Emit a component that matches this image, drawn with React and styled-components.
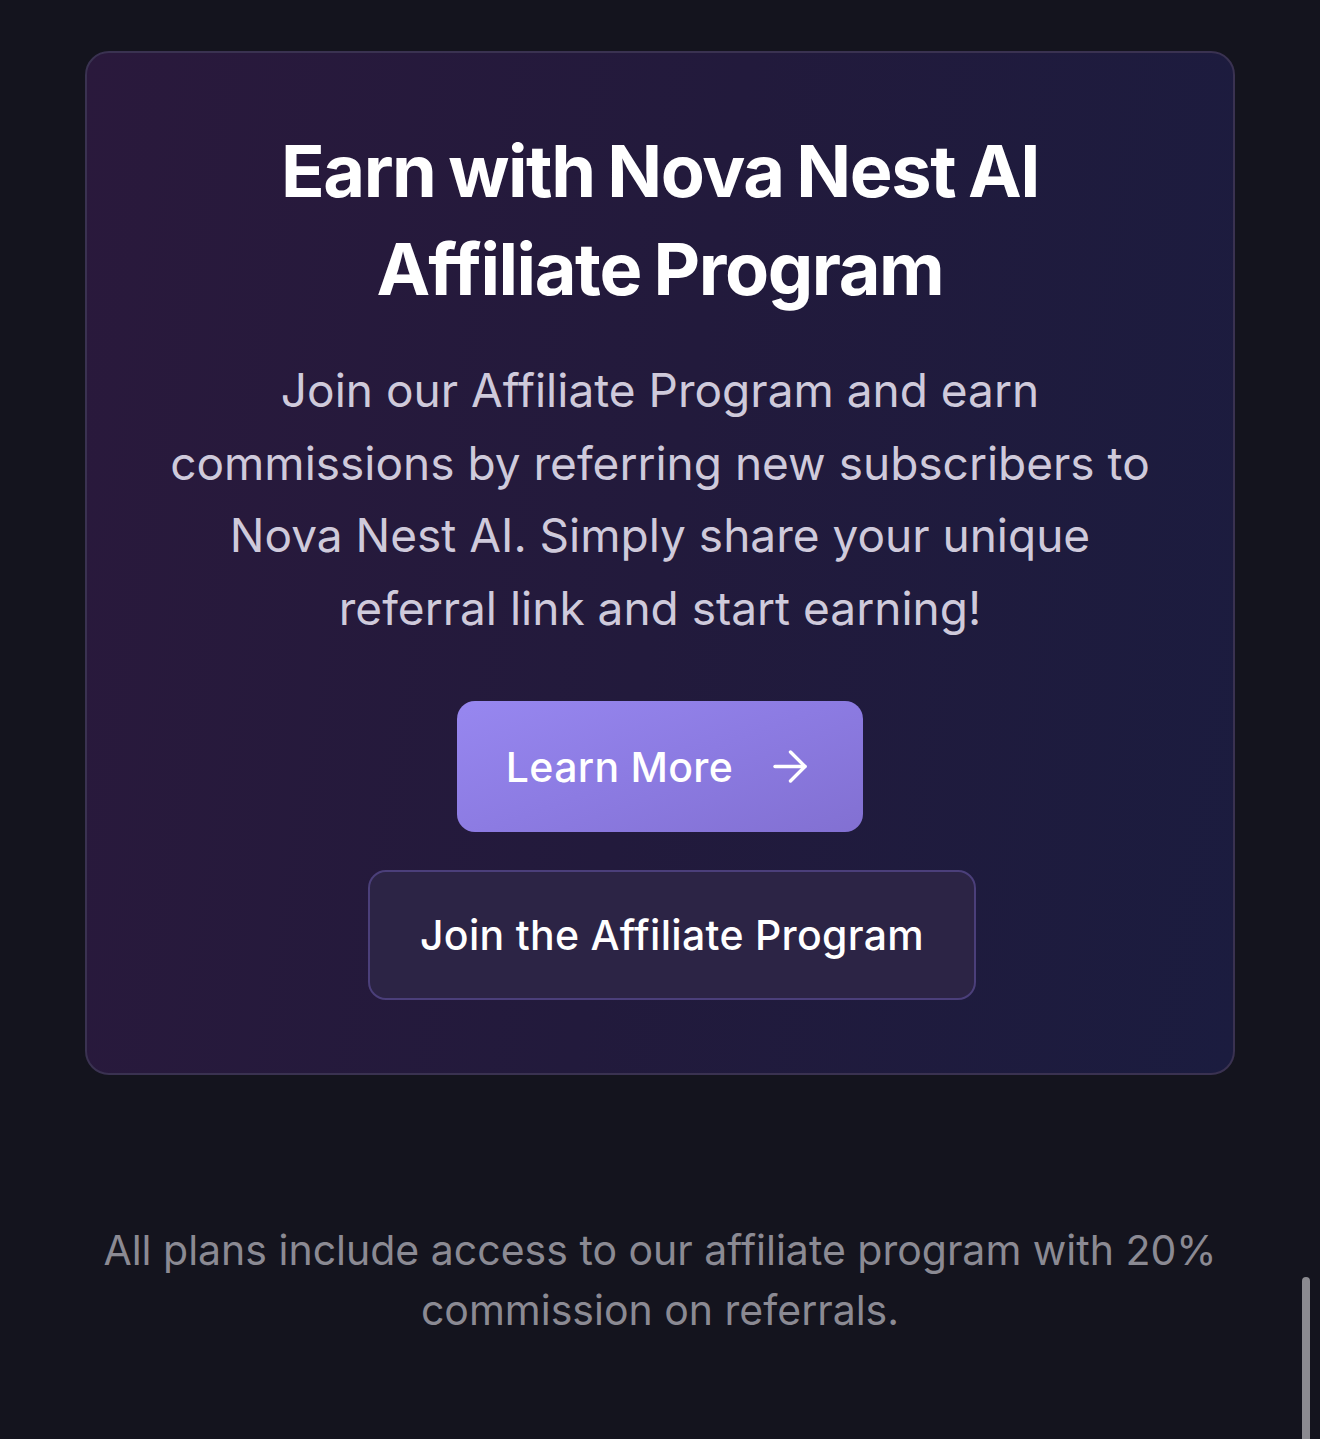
import React from 'react';
import styled, { createGlobalStyle } from 'styled-components';

const Global = createGlobalStyle`
  html, body {
    margin: 0;
    padding: 0;
    background: #14141e;
  }
  body {
    font-family: Inter, "Noto Sans", "Liberation Sans", sans-serif;
    -webkit-font-smoothing: antialiased;
  }
`;

const Page = styled.div`
  min-height: 1439px;
  padding: 51px 85px 0;
  box-sizing: border-box;
  display: flex;
  flex-direction: column;
  align-items: stretch;
`;

const Card = styled.section`
  border: 2px solid #3a3251;
  border-radius: 24px;
  background: linear-gradient(100deg, #2a193c 0%, #221a3c 50%, #1b1c3f 100%);
  padding: 69px 60px 73px;
  display: flex;
  flex-direction: column;
  align-items: center;
  text-align: center;
`;

const Title = styled.h2`
  margin: 0;
  font-size: 72px;
  line-height: 98px;
  font-weight: 700;
  color: #ffffff;
  letter-spacing: -1.4px;
  word-spacing: -3px;
  max-width: 800px;
`;

const Lead = styled.p`
  margin: 36px 0 0;
  font-size: 46px;
  line-height: 72.5px;
  font-weight: 400;
  color: #cfcadb;
  max-width: 1000px;
`;

const Actions = styled.div`
  margin-top: 57px;
  display: flex;
  flex-direction: column;
  align-items: center;
  gap: 38px;
`;

const Button = styled.button`
  font-family: inherit;
  height: ${p => (p.$primary ? '131px' : '130px')};
  box-sizing: border-box;
  border-radius: 18px;
  display: inline-flex;
  align-items: center;
  justify-content: center;
  gap: 40px;
  font-size: 41px;
  font-weight: 500;
  letter-spacing: 0.3px;
  color: #ffffff;
  cursor: pointer;
  margin-left: ${p => (p.$primary ? '0' : '24px')};
  padding: ${p => (p.$primary ? '0 56px 0 49px' : '0 50px')};
  border: ${p => (p.$primary ? 'none' : '2px solid #4b3f7a')};
  background: ${p =>
    p.$primary
      ? 'linear-gradient(160deg, #9787f0 0%, #8c7be2 50%, #8270d2 100%)'
      : '#2c2445'};
`;

const Arrow = () => (
  <svg width="34" height="33" viewBox="0 0 34 33" fill="none" stroke="#fff" strokeWidth="3.4" strokeLinecap="round" strokeLinejoin="round">
    <path d="M2 16.5h30" />
    <path d="M17.5 2 32 16.5 17.5 31" />
  </svg>
);

const Note = styled.p`
  margin: 145px 0 0;
  padding: 0 10px;
  font-size: 41px;
  line-height: 60px;
  color: #8b8a93;
  text-align: center;
`;

const Scrollbar = styled.div`
  position: fixed;
  right: 10px;
  top: 1277px;
  width: 8px;
  height: 180px;
  border-radius: 4px;
  background: #8b8a90;
`;

export default function App() {
  return (
    <>
      <Global />
      <Page>
        <Card>
          <Title>Earn with Nova Nest AI Affiliate Program</Title>
          <Lead>
            Join our Affiliate Program and earn commissions by referring new subscribers to Nova Nest AI. Simply share your unique referral link and start earning!
          </Lead>
          <Actions>
            <Button $primary>
              Learn More
              <Arrow />
            </Button>
            <Button>Join the Affiliate Program</Button>
          </Actions>
        </Card>
        <Note>All plans include access to our affiliate program with 20% commission on referrals.</Note>
      </Page>
      <Scrollbar />
    </>
  );
}
